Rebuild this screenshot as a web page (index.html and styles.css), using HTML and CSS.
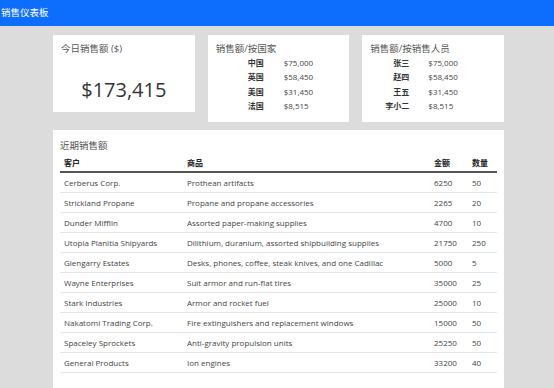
FILE: index.html
```html
<!DOCTYPE html>
<html lang="zh">

<head>
  <meta charset="UTF-8">
  <title>销售仪表板</title>
  <meta name="viewport" content="width=device-width, initial-scale=1.0">
  <link rel="stylesheet" href="styles.css">
</head>

<body>

  <!-- Barra superior -->
  <header class="topbar">销售仪表板</header>

  <main class="dashboard">

    <!-- Tarjetas de resumen -->
    <section class="cards">
      <div class="card">
        <h3>今日销售额 ($)</h3>
        <div class="total">$173,415</div>
      </div>

      <div class="card">
        <h3>销售额/按国家</h3>
        <div class="breakdown by-country">
          <span class="name">中国</span><span>$75,000</span>
          <span class="name">英国</span><span>$58,450</span>
          <span class="name">美国</span><span>$31,450</span>
          <span class="name">法国</span><span>$8,515</span>
        </div>
      </div>

      <div class="card">
        <h3>销售额/按销售人员</h3>
        <div class="breakdown by-person">
          <span class="name">张三</span><span>$75,000</span>
          <span class="name">赵四</span><span>$58,450</span>
          <span class="name">王五</span><span>$31,450</span>
          <span class="name">李小二</span><span>$8,515</span>
        </div>
      </div>
    </section>

    <!-- Ventas recientes -->
    <section class="card recent">
      <h3>近期销售额</h3>
      <table class="sales">
        <thead>
          <tr>
            <th class="col-client">客户</th>
            <th class="col-product">商品</th>
            <th class="col-amount">金额</th>
            <th class="col-qty">数量</th>
          </tr>
        </thead>
        <tbody>
          <tr><td>Cerberus Corp.</td><td>Prothean artifacts</td><td>6250</td><td>50</td></tr>
          <tr><td>Strickland Propane</td><td>Propane and propane accessories</td><td>2265</td><td>20</td></tr>
          <tr><td>Dunder Mifflin</td><td>Assorted paper-making supplies</td><td>4700</td><td>10</td></tr>
          <tr><td>Utopia Planitia Shipyards</td><td>Dilithium, duranium, assorted shipbuilding supplies</td><td>21750</td><td>250</td></tr>
          <tr><td>Glengarry Estates</td><td>Desks, phones, coffee, steak knives, and one Cadillac</td><td>5000</td><td>5</td></tr>
          <tr><td>Wayne Enterprises</td><td>Suit armor and run-flat tires</td><td>35000</td><td>25</td></tr>
          <tr><td>Stark Industries</td><td>Armor and rocket fuel</td><td>25000</td><td>10</td></tr>
          <tr><td>Nakatomi Trading Corp.</td><td>Fire extinguishers and replacement windows</td><td>15000</td><td>50</td></tr>
          <tr><td>Spaceley Sprockets</td><td>Anti-gravity propulsion units</td><td>25250</td><td>50</td></tr>
          <tr><td>General Products</td><td>Ion engines</td><td>33200</td><td>40</td></tr>
        </tbody>
      </table>
    </section>

  </main>

</body>

</html>
```

FILE: styles.css
```css
body {
  font-family: "Open Sans", "Noto Sans CJK SC", sans-serif;
  font-size: 8px;
  color: #444;
  background-color: #dcdcdc;
  margin: 0;
}

/* Barra superior */
.topbar {
  background-color: #0d6efd;
  color: white;
  font-size: 9.5px;
  height: 26px;
  line-height: 26px;
  padding-left: 1px;
}

/* Contenedor */
.dashboard {
  width: 451px;
  margin: 9px 0 0 53px;
}

.cards {
  display: grid;
  grid-template-columns: repeat(3, 1fr);
  gap: 13px;
  align-items: start;
  margin-bottom: 8px;
}

.card {
  background: #fff;
  padding: 7px 8px 8px;
}

.card h3 {
  margin: 0;
  font-size: 9.5px;
  font-weight: normal;
  color: #555;
  line-height: 14px;
}

.total {
  text-align: center;
  font-size: 20px;
  color: #333;
  margin: 20px 0 0;
  line-height: 28px;
}

/* Desglose */
.breakdown {
  display: grid;
  line-height: 14.3px;
  margin: 0 0 1px;
  color: #444;
}

.breakdown .name {
  text-align: right;
  font-weight: bold;
  color: #333;
}

.by-country {
  grid-template-columns: 48px auto;
  column-gap: 20px;
}

.by-person {
  grid-template-columns: 39px auto;
  column-gap: 19px;
}

/* Tabla */
.recent {
  padding: 9px 7px 15px;
}

.sales {
  width: 100%;
  border-collapse: collapse;
  margin-top: 2px;
  color: #444;
}

.sales th {
  text-align: left;
  font-weight: bold;
  color: #222;
  padding: 2px 4px 3px;
  border-bottom: 2px solid #555;
}

.sales td {
  padding: 0 4px;
  height: 19px;
  border-bottom: 1px solid #e4e7ea;
}

.col-client {
  width: 115px;
}

.col-product {
  width: 239px;
}

.col-amount {
  width: 30px;
}
```
